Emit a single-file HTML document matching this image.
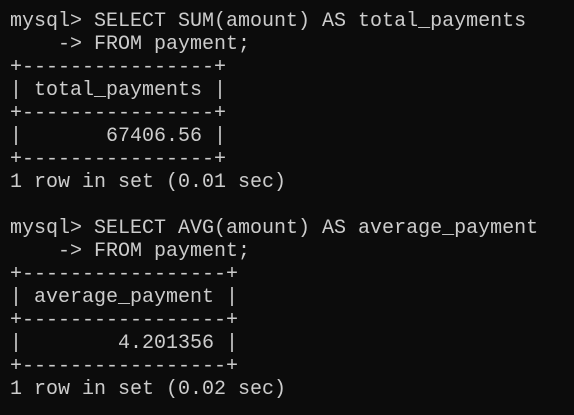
<!DOCTYPE html>
<html><head><style>
html,body{margin:0;padding:0;background:#0c0c0c;width:574px;height:415px;overflow:hidden}
pre{margin:0;position:absolute;left:10px;top:10px;font-family:"Liberation Mono",monospace;font-size:20px;line-height:23px;color:#cccccc;letter-spacing:0}
</style></head><body>
<pre>mysql&gt; SELECT SUM(amount) AS total_payments
    -&gt; FROM payment;
+----------------+
| total_payments |
+----------------+
|       67406.56 |
+----------------+
1 row in set (0.01 sec)

mysql&gt; SELECT AVG(amount) AS average_payment
    -&gt; FROM payment;
+-----------------+
| average_payment |
+-----------------+
|        4.201356 |
+-----------------+
1 row in set (0.02 sec)</pre>
</body></html>
